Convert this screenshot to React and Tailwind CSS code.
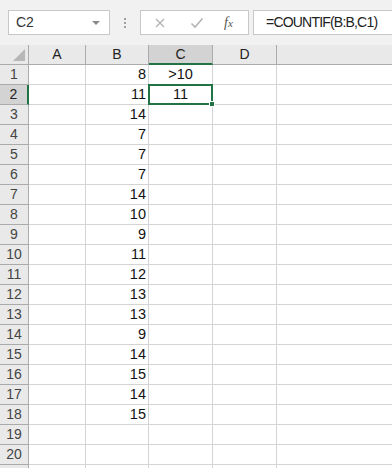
import React from "react";

const B = [8, 11, 14, 7, 7, 7, 14, 10, 9, 11, 12, 13, 13, 9, 14, 15, 14, 15];
const cols = ["A", "B", "C", "D", ""];
const font = { fontFamily: '"Liberation Sans", Arial, sans-serif' };

export default function App() {
  const rows = Array.from({ length: 21 }, (_, i) => i + 1);
  return (
    <div className="w-[392px] h-[468px] overflow-hidden bg-white text-[#222]" style={font}>
      {/* formula bar */}
      <div className="h-[45px] bg-[#f1f1f1] flex items-start pt-[10px]">
        <div className="ml-[8px] w-[102px] h-[25px] bg-white border border-[#c8c8c8] flex items-center justify-between pl-[7px] pr-[9px]">
          <span className="text-[14px] text-[#333]">C2</span>
          <span className="w-0 h-0 border-l-[4px] border-r-[4px] border-t-[4px] border-l-transparent border-r-transparent border-t-[#8a8a8a]" />
        </div>
        <div className="w-[30px] h-[25px] flex flex-col items-center justify-center gap-[2px]">
          <span className="w-[2px] h-[2px] bg-[#a0a0a0]" />
          <span className="w-[2px] h-[2px] bg-[#a0a0a0]" />
          <span className="w-[2px] h-[2px] bg-[#a0a0a0]" />
        </div>
        <div className="w-[109px] h-[25px] bg-white border border-[#c8c8c8] flex items-center">
          <svg width="12" height="12" viewBox="0 0 12 12" className="ml-[13px]">
            <path d="M2 2 L10 10 M10 2 L2 10" stroke="#b4b4b4" strokeWidth="1.4" fill="none" />
          </svg>
          <svg width="14" height="12" viewBox="0 0 14 12" className="ml-[24px]">
            <path d="M1.5 6.5 L5 10 L12.5 1.5" stroke="#b4b4b4" strokeWidth="1.6" fill="none" />
          </svg>
          <span className="ml-[20px] text-[14px] italic text-[#555]" style={{ fontFamily: '"Liberation Serif", serif' }}>
            f<span className="text-[11px]">x</span>
          </span>
        </div>
        <div className="ml-[4px] flex-1 h-[25px] bg-white border-y border-l border-[#c8c8c8] flex items-center pl-[12px]">
          <span className="text-[14px] tracking-[-0.8px] text-[#222]">=COUNTIF(B:B,C1)</span>
        </div>
      </div>

      {/* grid */}
      <div className="grid grid-cols-[29px_57px_63px_64px_64px_1fr]">
        {/* header row */}
        <div className="h-[20px] bg-[#e9e9e9] border-r border-b border-[#ababab] relative">
          <svg width="12" height="12" viewBox="0 0 12 12" className="absolute right-[3px] bottom-[3px]">
            <path d="M12 0 L12 12 L0 12 Z" fill="#b7b7b7" />
          </svg>
        </div>
        {cols.map((c, i) =>
          c === "C" ? (
            <div key={i} className="h-[20px] bg-[#d3d3d3] border-r border-[#ababab] border-b-2 border-b-[#217346] flex items-center justify-center text-[14px] text-[#222]">
              {c}
            </div>
          ) : (
            <div key={i} className={`h-[20px] bg-[#e9e9e9] ${i < 4 ? "border-r" : ""} border-b border-[#ababab] flex items-center justify-center text-[14px] text-[#222]`}>
              {c}
            </div>
          )
        )}

        {rows.map((r) => (
          <React.Fragment key={r}>
            {r === 2 ? (
              <div className="h-[20px] bg-[#d3d3d3] border-b border-[#ababab] border-r-2 border-r-[#217346] flex items-center justify-center text-[14px] text-[#222]">
                {r}
              </div>
            ) : (
              <div className="h-[20px] bg-[#e9e9e9] border-r border-b border-[#ababab] flex items-center justify-center text-[14px] text-[#444]">
                {r <= 20 ? r : ""}
              </div>
            )}
            <div className="h-[20px] border-r border-b border-[#d4d4d4]" />
            <div className="h-[20px] border-r border-b border-[#d4d4d4] flex items-center justify-end pr-[2px] text-[14.5px] text-[#111]">
              {B[r - 1] ?? ""}
            </div>
            {r === 2 ? (
              <div className="h-[20px] relative border-r border-b border-[#d4d4d4] flex items-center justify-center text-[14.5px] text-[#111]">
                <span className="absolute -left-[1px] -top-[1px] right-[-1px] bottom-[-1px] border-2 border-[#217346]" />
                <span className="absolute right-[-3px] bottom-[-3px] w-[6px] h-[6px] bg-[#217346] border border-white" />
                11
              </div>
            ) : (
              <div className="h-[20px] border-r border-b border-[#d4d4d4] flex items-center justify-center text-[14.5px] text-[#111]">
                {r === 1 ? ">10" : ""}
              </div>
            )}
            <div className="h-[20px] border-r border-b border-[#d4d4d4]" />
            <div className="h-[20px] border-b border-[#d4d4d4]" />
          </React.Fragment>
        ))}
      </div>
    </div>
  );
}
